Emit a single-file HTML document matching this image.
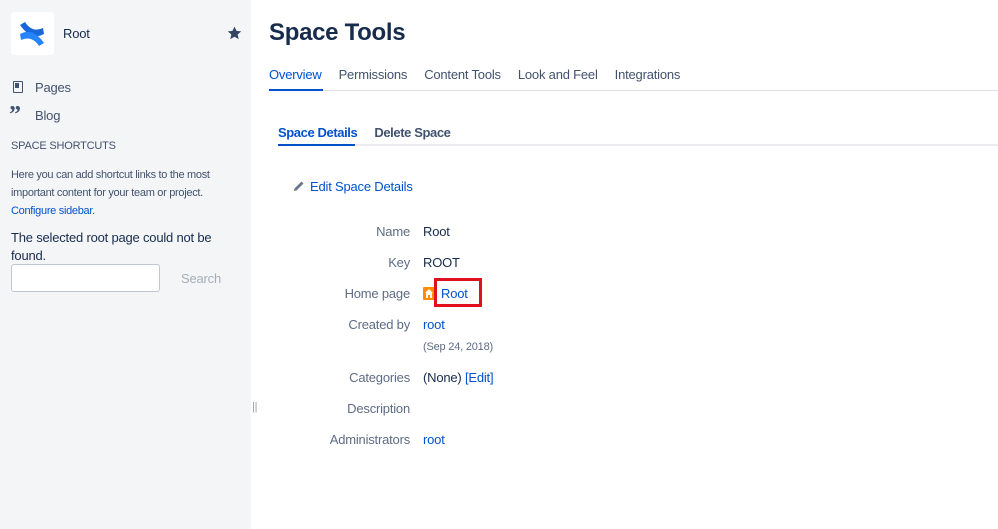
<!DOCTYPE html><html><head><style>
body{margin:0;width:998px;height:529px;overflow:hidden;font-family:"Liberation Sans",sans-serif;color:#172b4d;background:#fff;position:relative;letter-spacing:-0.2px}
.a{position:absolute;white-space:nowrap}
.sb{position:absolute;left:0;top:0;width:251px;height:529px;background:#f4f5f7}
.blue{color:#0052cc}
.lbl{position:absolute;right:588px;font-size:13px;color:#5e6c84;white-space:nowrap}
.val{position:absolute;left:423px;font-size:13px;white-space:nowrap}
</style></head><body>
<div class="sb"></div>
<div class="a" style="left:11px;top:12px;width:43px;height:43px;background:#fff;border-radius:3px"></div>
<svg class="a" style="left:18px;top:20px" width="28" height="28" viewBox="0 0 28 28"><path d="M2 5 L7 2 Q14 13 25 8 L26 14 Q13 21 2 5Z" fill="#1868db"/><path d="M26 23 L21 26 Q14 15 3 20 L2 14 Q15 7 26 23Z" fill="#2684ff"/></svg>
<div class="a" style="left:63px;top:26px;font-size:13px">Root</div>
<svg class="a" style="left:227px;top:26px" width="15" height="14" viewBox="0 0 24 23"><path d="M12 1l3.3 7 7.7.8-5.8 5.2 1.7 7.6L12 17.7l-6.9 3.9 1.7-7.6L1 8.8l7.7-.8z" fill="#344563"/></svg>
<div class="a" style="left:13px;top:81px;width:8px;height:10px;border:1.5px solid #42526e;border-radius:1px"></div>
<div class="a" style="left:15px;top:83px;width:4px;height:5px;background:#42526e"></div>
<div class="a" style="left:35px;top:80px;font-size:13px;color:#42526e">Pages</div>
<div class="a" style="left:9px;top:102px;font-size:24px;font-weight:bold;color:#42526e;font-family:'Liberation Serif',serif">”</div>
<div class="a" style="left:35px;top:108px;font-size:13px;color:#42526e">Blog</div>
<div class="a" style="left:11px;top:140px;font-size:11px;color:#42526e">SPACE SHORTCUTS</div>
<div class="a" style="left:11px;top:166px;font-size:11px;line-height:18px;color:#42526e;letter-spacing:-0.3px">Here you can add shortcut links to the most<br>important content for your team or project.<br><span class="blue">Configure sidebar.</span></div>
<div class="a" style="left:11px;top:229px;font-size:13px;line-height:18px">The selected root page could not be<br>found.</div>
<div class="a" style="left:11px;top:264px;width:147px;height:26px;background:#fff;border:1px solid #c1c7d0;border-radius:3px"></div>
<div class="a" style="left:181px;top:271px;font-size:13px;color:#a5adba">Search</div>
<div class="a" style="left:252px;top:401px;font-size:11px;color:#97a0af">||</div>
<div class="a" style="left:269px;top:19px;font-size:24px;font-weight:bold;letter-spacing:-0.3px">Space Tools</div>
<div class="a" style="left:269px;top:67px;font-size:13px;color:#42526e"><span class="blue" style="margin-right:17px">Overview</span><span style="margin-right:17px">Permissions</span><span style="margin-right:17px">Content Tools</span><span style="margin-right:17px">Look and Feel</span>Integrations</div>
<div class="a" style="left:269px;top:90px;width:729px;height:1px;background:#dfe1e6"></div>
<div class="a" style="left:269px;top:89px;width:54px;height:2px;background:#0052cc"></div>
<div class="a" style="left:278px;top:125px;font-size:13px;font-weight:bold;color:#42526e;letter-spacing:-0.4px"><span class="blue" style="margin-right:17px">Space Details</span>Delete Space</div>
<div class="a" style="left:278px;top:144px;width:720px;height:2px;background:#ebecf0"></div>
<div class="a" style="left:278px;top:144px;width:77px;height:2px;background:#0052cc"></div>
<svg class="a" style="left:293px;top:180px" width="12" height="12" viewBox="0 0 12 12"><path d="M1 11 L1.5 8.5 L8.5 1.5 L10.5 3.5 L3.5 10.5Z" fill="#6b778c"/></svg>
<div class="a blue" style="left:310px;top:179px;font-size:13px">Edit Space Details</div>
<div class="lbl" style="top:224px">Name</div><div class="val" style="top:224px">Root</div>
<div class="lbl" style="top:255px">Key</div><div class="val" style="top:255px">ROOT</div>
<div class="lbl" style="top:286px">Home page</div>
<div class="a" style="left:423px;top:287px;width:12px;height:13px;background:#ff8b00;border-radius:1px"></div>
<svg class="a" style="left:424px;top:288px" width="10" height="11" viewBox="0 0 10 11"><path d="M5 1 L9 5 H8 V10 H6 V7 H4 V10 H2 V5 H1Z" fill="#fff"/></svg>
<div class="a" style="left:434px;top:278px;width:42px;height:23px;border:3px solid #e0101c"></div>
<div class="val blue" style="top:286px;left:441px">Root</div>
<div class="lbl" style="top:317px">Created by</div><div class="val blue" style="top:317px">root</div>
<div class="val" style="top:341px;font-size:11px;color:#5e6c84">(Sep 24, 2018)</div>
<div class="lbl" style="top:370px">Categories</div><div class="val" style="top:370px">(None) <span class="blue">[Edit]</span></div>
<div class="lbl" style="top:401px">Description</div>
<div class="lbl" style="top:432px">Administrators</div><div class="val blue" style="top:432px">root</div>
</body></html>
